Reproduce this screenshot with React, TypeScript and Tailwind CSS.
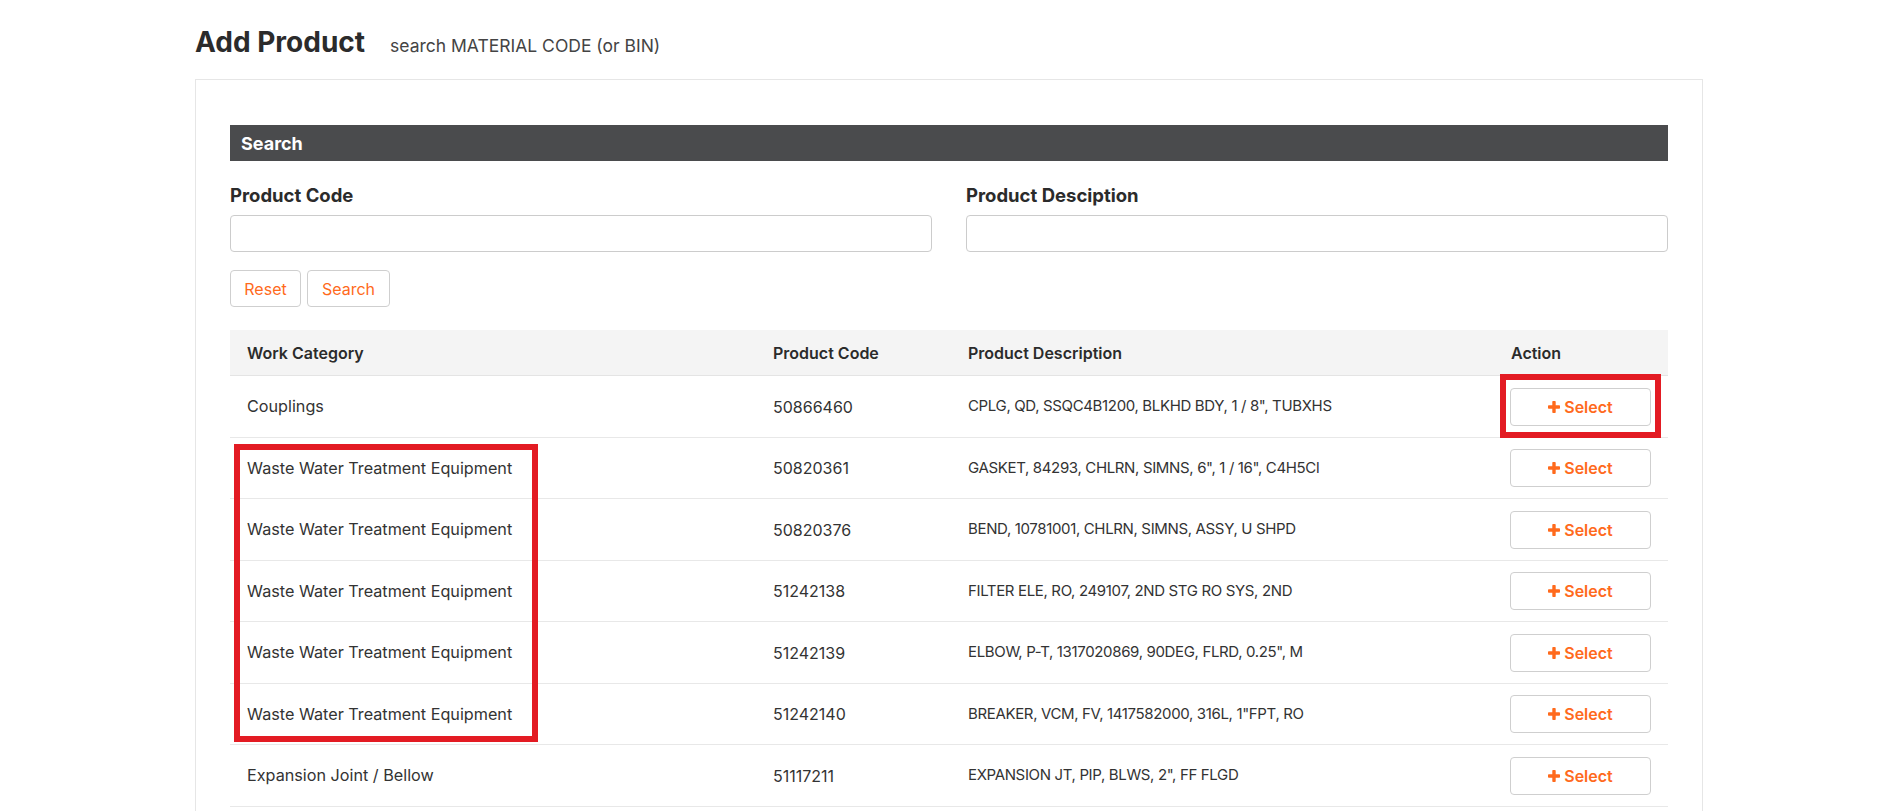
import React from 'react';

const FONT = { fontFamily: 'Inter, "Open Sans", sans-serif' };

type Row = { category: string; code: string; description: string };

const rows: Row[] = [
  { category: 'Couplings', code: '50866460', description: 'CPLG, QD, SSQC4B1200, BLKHD BDY, 1 / 8", TUBXHS' },
  { category: 'Waste Water Treatment Equipment', code: '50820361', description: 'GASKET, 84293, CHLRN, SIMNS, 6", 1 / 16", C4H5Cl' },
  { category: 'Waste Water Treatment Equipment', code: '50820376', description: 'BEND, 10781001, CHLRN, SIMNS, ASSY, U SHPD' },
  { category: 'Waste Water Treatment Equipment', code: '51242138', description: 'FILTER ELE, RO, 249107, 2ND STG RO SYS, 2ND' },
  { category: 'Waste Water Treatment Equipment', code: '51242139', description: 'ELBOW, P-T, 1317020869, 90DEG, FLRD, 0.25", M' },
  { category: 'Waste Water Treatment Equipment', code: '51242140', description: 'BREAKER, VCM, FV, 1417582000, 316L, 1"FPT, RO' },
  { category: 'Expansion Joint / Bellow', code: '51117211', description: 'EXPANSION JT, PIP, BLWS, 2", FF FLGD' },
];

// thick font-awesome style plus
function PlusIcon() {
  return (
    <svg width="12" height="12" viewBox="0 0 12 12" aria-hidden="true">
      <rect x="4.3" y="0" width="3.4" height="12" rx="0.8" fill="currentColor" />
      <rect x="0" y="4.3" width="12" height="3.4" rx="0.8" fill="currentColor" />
    </svg>
  );
}

function SelectButton() {
  return (
    <button
      type="button"
      className="flex h-[38px] w-[141px] items-center justify-center gap-[4px] rounded-[4px] border border-[#cfcfcf] bg-white text-[16px] font-semibold text-[#ff6a1c]"
    >
      <PlusIcon />
      <span>Select</span>
    </button>
  );
}

const COLS = 'grid grid-cols-[526px_195px_543px_174px]';

export default function App() {
  return (
    <div className="min-h-screen bg-white text-[#2f2f2f]" style={FONT}>
      <div className="ml-[195px] w-[1508px] pt-[25px]">
        <div className="flex items-baseline gap-[25px]">
          <h1 className="text-[28px] font-bold leading-[34px] text-[#2b2b2b]">Add Product</h1>
          <span className="text-[17.5px] text-[#444]">search MATERIAL CODE (or BIN)</span>
        </div>

        <div className="mt-[20px] border border-[#e6e6e6] px-[34px] pt-[45px] pb-[40px]">
          <div className="flex h-[36px] items-center bg-[#4a4b4d] pl-[11px] text-[18px] font-bold text-white">
            Search
          </div>

          <div className="mt-[22px] grid grid-cols-2 gap-x-[34px]">
            <div>
              <label className="block text-[18.5px] font-bold leading-[24px] text-[#2b2b2b]">Product Code</label>
              <input className="mt-[8px] h-[37px] w-full rounded-[4px] border border-[#cccccc] px-3 outline-none" />
            </div>
            <div>
              <label className="block text-[18.5px] font-bold leading-[24px] text-[#2b2b2b]">Product Desciption</label>
              <input className="mt-[8px] h-[37px] w-full rounded-[4px] border border-[#cccccc] px-3 outline-none" />
            </div>
          </div>

          <div className="mt-[18px] flex gap-[6px]">
            <button type="button" className="h-[37px] w-[71px] rounded-[4px] border border-[#cfcfcf] text-[16px] text-[#ff6a1c]">
              Reset
            </button>
            <button type="button" className="h-[37px] w-[83px] rounded-[4px] border border-[#cfcfcf] text-[16px] text-[#ff6a1c]">
              Search
            </button>
          </div>

          <div className="relative mt-[23px]">
            <div className={`${COLS} h-[46px] items-center border-b border-[#e4e4e4] bg-[#f4f4f4] text-[16px] font-semibold text-[#2b2b2b]`}>
              <div className="pl-[17px]">Work Category</div>
              <div className="pl-[17px]">Product Code</div>
              <div className="pl-[17px]">Product Description</div>
              <div className="pl-[17px]">Action</div>
            </div>
            {rows.map((r, i) => (
              <div key={i} className={`${COLS} h-[61.5px] items-center border-b border-[#e8e8e8] text-[#333]`}>
                <div className="pl-[17px] text-[16.2px]">{r.category}</div>
                <div className="pl-[17px] text-[16px]">{r.code}</div>
                <div className="pl-[17px] text-[15px] tracking-[-0.35px]">{r.description}</div>
                <div className="pl-[16px]">
                  <SelectButton />
                </div>
              </div>
            ))}

            {/* annotation boxes */}
            <div className="pointer-events-none absolute left-[1270px] top-[44px] h-[63.5px] w-[161px] border-[6px] border-[#e31b23]" />
            <div className="pointer-events-none absolute left-[4px] top-[114px] h-[298px] w-[304px] border-[6px] border-[#e31b23]" />
          </div>
        </div>
      </div>
    </div>
  );
}
